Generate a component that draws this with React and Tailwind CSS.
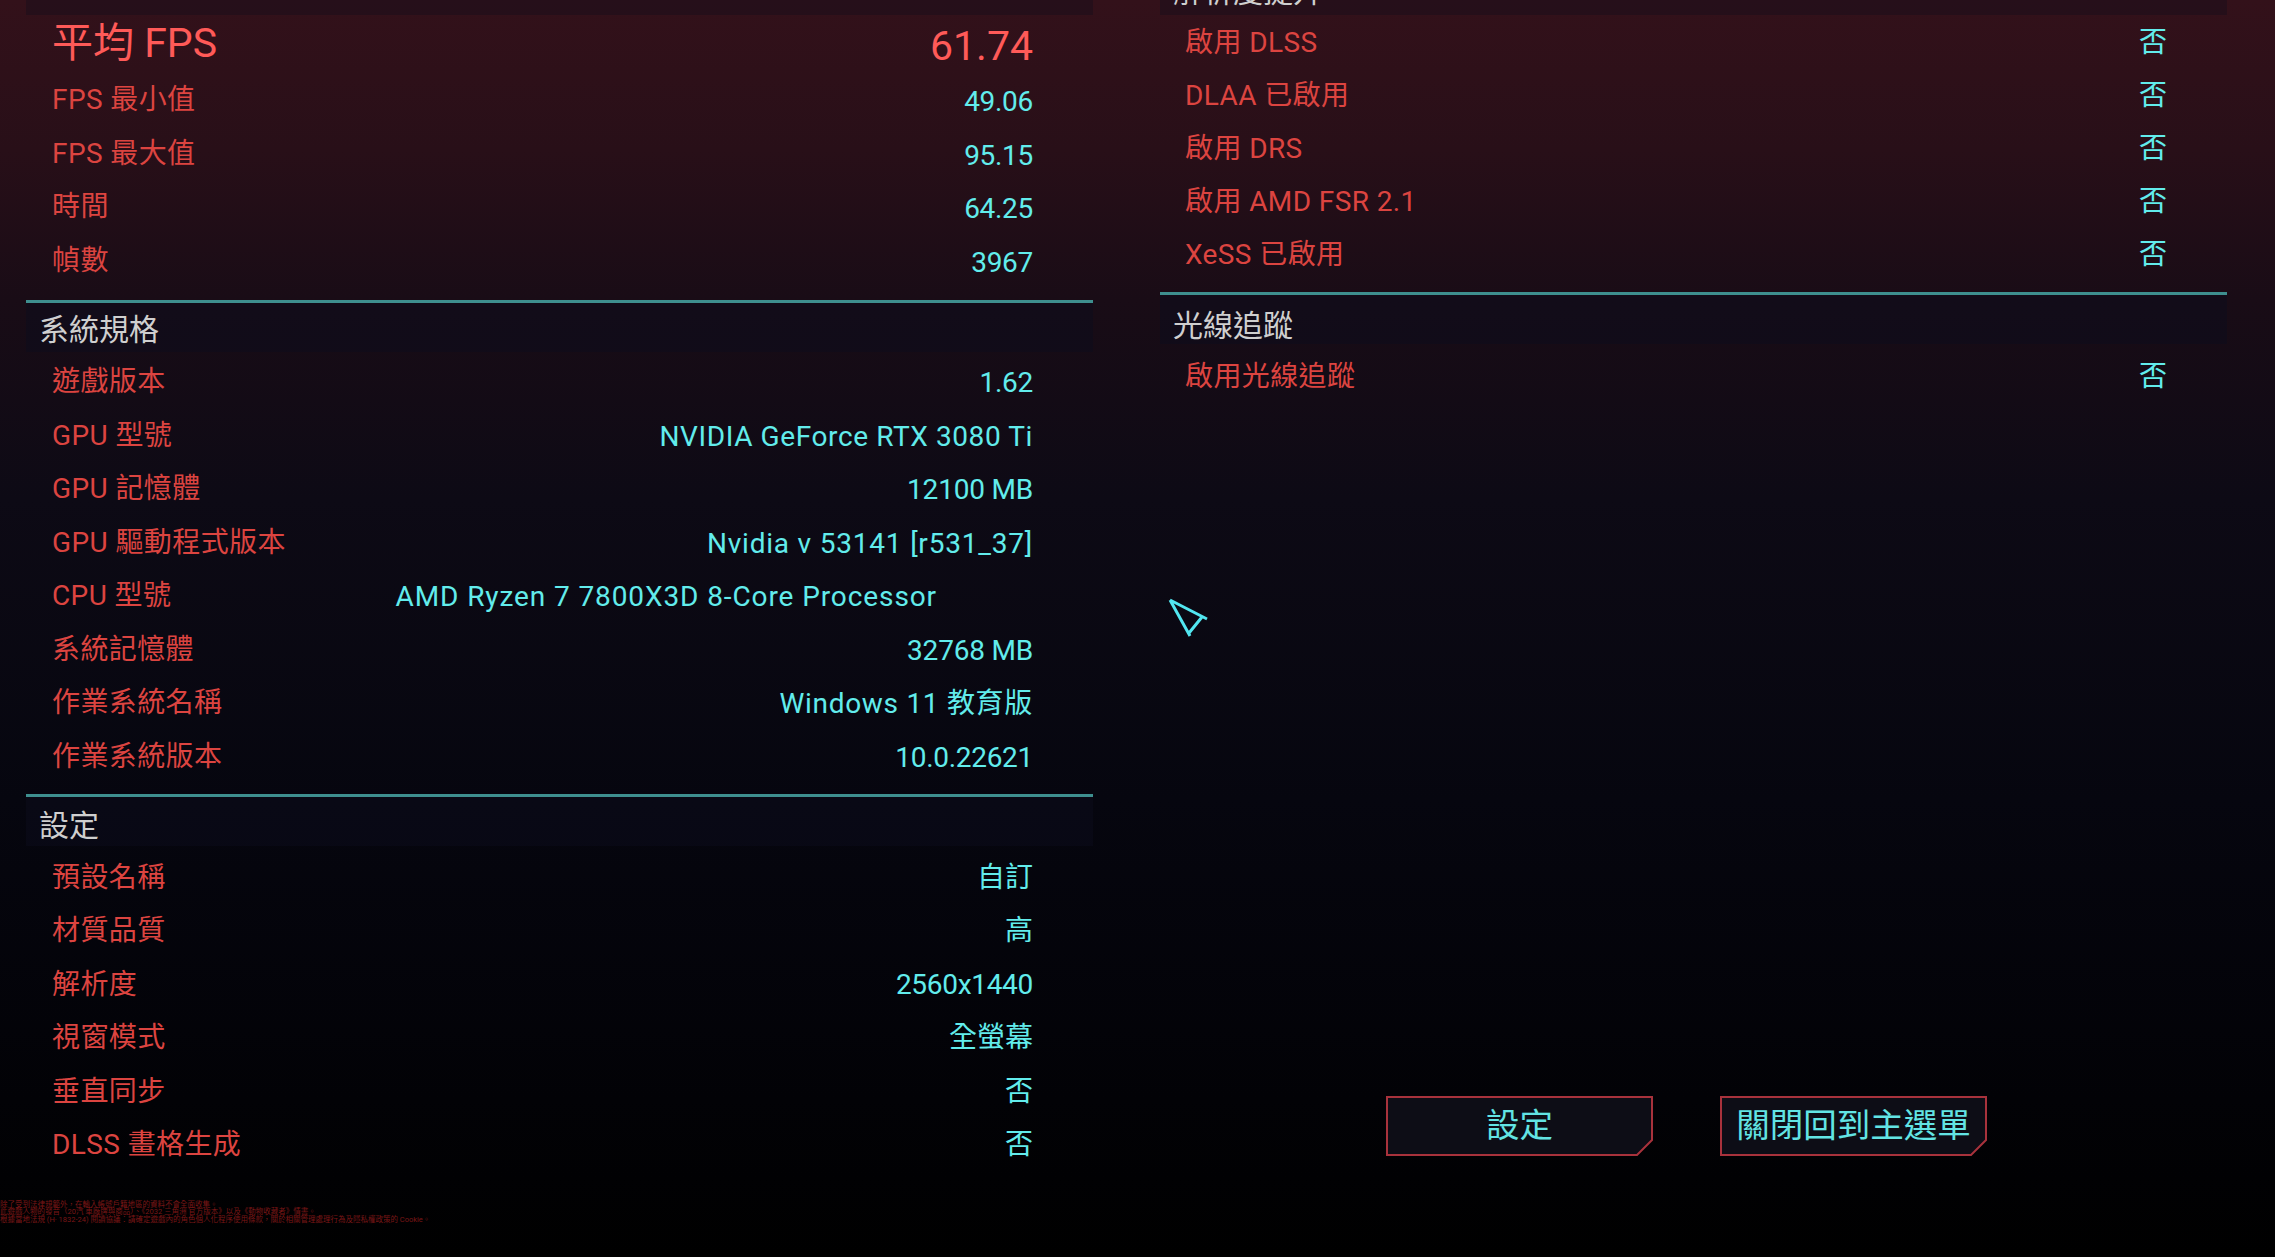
import React from "react";

const FONT = "font-['Roboto','Noto_Sans_CJK_TC',sans-serif]";

const stats = [
  ["FPS 最小值", "49.06"],
  ["FPS 最大值", "95.15"],
  ["時間", "64.25"],
  ["幀數", "3967"],
];

const specs = [
  ["遊戲版本", "1.62", "tracking-[-0.3px]"],
  ["GPU 型號", "NVIDIA GeForce RTX 3080 Ti", "tracking-[0.6px]"],
  ["GPU 記憶體", "12100 MB", "tracking-[-0.2px]"],
  ["GPU 驅動程式版本", "Nvidia v 53141 [r531_37]", "tracking-[0.8px]"],
  ["CPU 型號", "AMD Ryzen 7 7800X3D 8-Core Processor", "mr-[96px] tracking-[0.9px]"],
  ["系統記憶體", "32768 MB", "tracking-[-0.2px]"],
  ["作業系統名稱", "Windows 11 教育版", "tracking-[0.7px]"],
  ["作業系統版本", "10.0.22621", "tracking-[-0.3px]"],
];

const settings = [
  ["預設名稱", "自訂"],
  ["材質品質", "高"],
  ["解析度", "2560x1440", "tracking-[-0.3px]"],
  ["視窗模式", "全螢幕"],
  ["垂直同步", "否"],
  ["DLSS 畫格生成", "否"],
];

const scaling = ["啟用 DLSS", "DLAA 已啟用", "啟用 DRS", "啟用 AMD FSR 2.1", "XeSS 已啟用"];

function Row({ label, value, rowClass = "", valueClass = "" }) {
  return (
    <div className={`flex h-[53.5px] items-center justify-between pl-[26px] pr-[60px] text-[28px] ${rowClass}`}>
      <span className="tracking-[0.4px] text-[#dc4440]">{label}</span>
      <span className={`text-[#62ecec] ${valueClass}`}>{value}</span>
    </div>
  );
}

function SwitchRow({ label, className = "pt-[3px]" }) {
  return (
    <div className={`flex h-[53px] items-center justify-between pl-[25px] pr-[60px] text-[28px] ${className}`}>
      <span className="tracking-[0.4px] text-[#dc4440]">{label}</span>
      <span className="text-[#62ecec]">否</span>
    </div>
  );
}

function SectionHeader({ title, className = "" }) {
  return (
    <div className={`flex h-[52px] items-center border-t-[3px] border-[#3e8f8f] bg-[#0b0c1c]/50 pl-[13px] text-[30px] text-[#cfcfcf] ${className}`}>
      {title}
    </div>
  );
}

function CutButton({ label }) {
  return (
    <button className="relative flex h-[60px] w-[267px] items-center justify-center text-[33.5px] text-[#62e4e4]">
      <svg className="absolute inset-0" width="267" height="60" viewBox="0 0 267 60">
        <path d="M1 1H266V44L251 59H1Z" fill="#0d0d16" stroke="#a8323c" strokeWidth="2" />
      </svg>
      <span className="relative">{label}</span>
    </button>
  );
}

export default function App() {
  return (
    <div className={`relative flex h-[1257px] w-[2275px] flex-col overflow-hidden bg-[linear-gradient(180deg,#33111a_0px,#280f18_150px,#190c16_300px,#0d0a15_500px,#06060f_800px,#020206_1100px,#000000_1257px)] ${FONT}`}>
      <div className="flex flex-1 gap-[67px] pl-[26px]">
        {/* left column */}
        <div className="w-[1067px]">
          <div className="h-[15px] bg-[#0b0c1c]/30" />
          <div className="flex h-[57px] items-center justify-between pl-[26px] pr-[60px]">
            <span className="text-[41px] text-[#ff5a58]">平均 FPS</span>
            <span className="translate-y-[3px] text-[41px] text-[#ff5a58]">61.74</span>
          </div>
          {stats.map(([l, v]) => (
            <Row key={l} label={l} value={v} rowClass="pt-[3px]" valueClass="translate-y-[2px] tracking-[-0.3px]" />
          ))}
          <SectionHeader title="系統規格" className="mt-[14px] pt-[3px]" />
          {specs.map(([l, v, c]) => (
            <Row key={l} label={l} value={v} rowClass="pt-[7px]" valueClass={`translate-y-px ${c}`} />
          ))}
          <SectionHeader title="設定" className="mt-[14px] pt-[8px]" />
          {settings.map(([l, v, c]) => (
            <Row key={l} label={l} value={v} rowClass="pt-[10px]" valueClass={c} />
          ))}
        </div>

        {/* right column */}
        <div className="flex w-[1067px] flex-col pb-[45px]">
          <div className="h-[15px] overflow-hidden bg-[#0b0c1c]/30 pl-[13px] text-[30px] leading-[30px] text-[#cfcfcf]">
            <div className="-mt-[23px]">解析度提升</div>
          </div>
          {scaling.map((l) => (
            <SwitchRow key={l} label={l} />
          ))}
          <SectionHeader title="光線追蹤" className="mt-[12px] pt-[12px]" />
          <SwitchRow label="啟用光線追蹤" className="pt-[12px]" />
          <div className="mt-auto flex gap-[67px] pl-[226px]">
            <CutButton label="設定" />
            <CutButton label="關閉回到主選單" />
          </div>
        </div>
      </div>

      <div className="h-[56px] text-[7.5px] leading-[7.3px] text-[#7a1616]">
        <p>除了受到法律規範外，在輸入帳號戶籍地區的資料不會全面收集。</p>
        <p>此遊戲人物的發音（20汽 車廠牌與商品）、《2032 三角洲 官方版本》以及《動物收藏者》情書。</p>
        <p>根據當地法規 (H· 1832-24) 閱讀協議：請確定遊戲內的角色個人化程序使用條款，關於相關管理處理行為及隱私權政策的 Cookie。</p>
      </div>

      {/* mouse pointer */}
      <svg className="absolute left-[1165px] top-[595px]" width="50" height="46" viewBox="0 0 50 46" fill="none" stroke="#52e6f0" strokeWidth="3">
        <path d="M5 5L42 24M5 5L25 41M37 22L24 38" />
      </svg>
    </div>
  );
}
